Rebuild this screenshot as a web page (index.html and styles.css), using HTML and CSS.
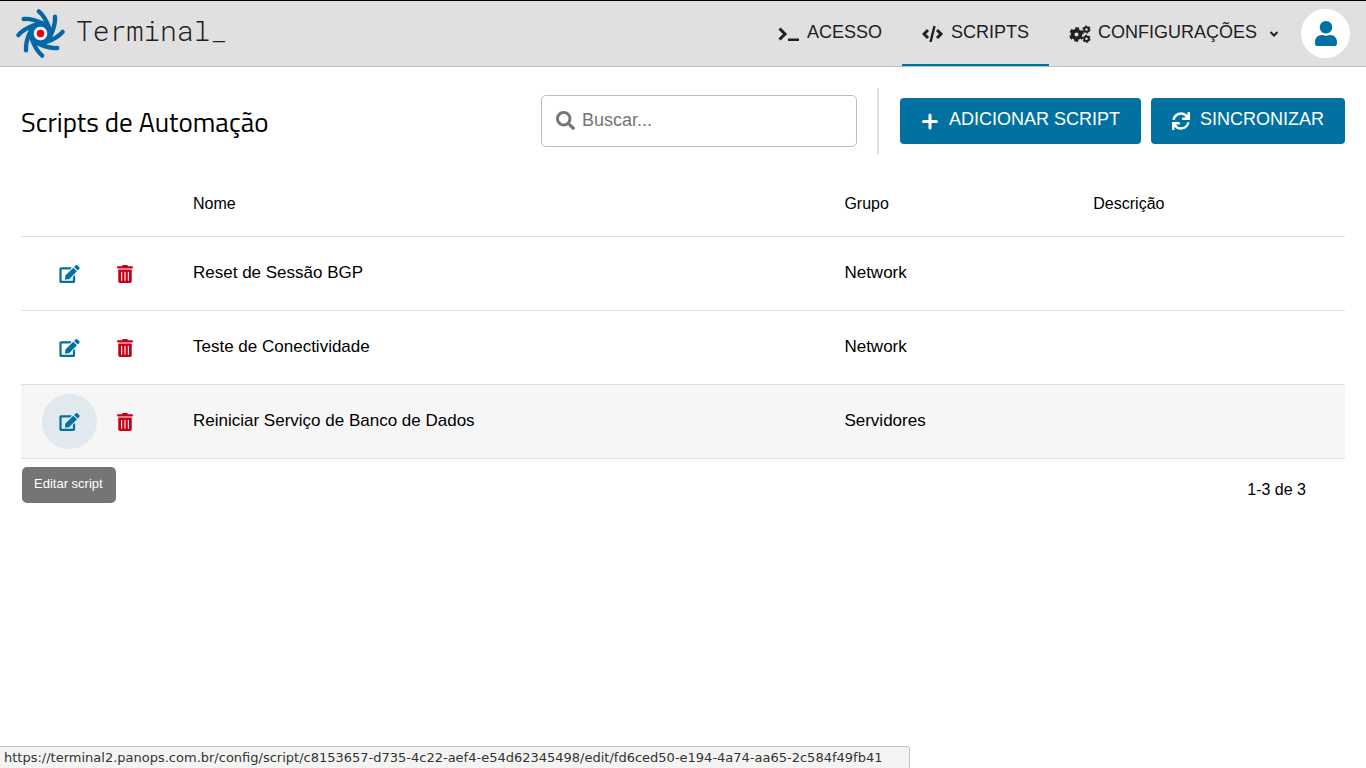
FILE: index.html
```html
<!DOCTYPE html>
<html lang="pt-BR">
<head>
<meta charset="utf-8">
<meta name="viewport" content="width=device-width, initial-scale=1">
<title>Terminal_ - Scripts de Automação</title>
<link rel="stylesheet" href="styles.css">
</head>
<body>
<svg class="symbols" aria-hidden="true">
  <symbol id="edit" viewBox="0 0 576 512"><path d="M402.6 83.2l90.2 90.2c3.8 3.8 3.8 10 0 13.8L274.4 405.6l-92.8 10.3c-12.4 1.4-22.9-9.1-21.5-21.5l10.3-92.8L388.8 83.2c3.8-3.8 10-3.8 13.8 0zm162-22.9l-48.8-48.8c-15.2-15.2-39.9-15.2-55.2 0l-35.4 35.4c-3.8 3.8-3.8 10 0 13.8l90.2 90.2c3.8 3.8 10 3.8 13.8 0l35.4-35.4c15.2-15.3 15.2-40 0-55.2zM384 346.2V448H64V128h229.8c3.2 0 6.2-1.3 8.5-3.5l40-40c7.6-7.6 2.2-20.5-8.5-20.5H48C21.5 64 0 85.5 0 112v352c0 26.5 21.5 48 48 48h352c26.5 0 48-21.5 48-48V306.2c0-10.7-12.9-16-20.5-8.5l-40 40c-2.2 2.3-3.5 5.3-3.5 8.5z"/></symbol>
  <symbol id="trash" viewBox="0 0 448 512"><path d="M32 464a48 48 0 0 0 48 48h288a48 48 0 0 0 48-48V128H32zm272-256a16 16 0 0 1 32 0v224a16 16 0 0 1-32 0zm-96 0a16 16 0 0 1 32 0v224a16 16 0 0 1-32 0zm-96 0a16 16 0 0 1 32 0v224a16 16 0 0 1-32 0zM432 32H312l-9.4-18.7A24 24 0 0 0 281.1 0H166.8a23.72 23.72 0 0 0-21.4 13.3L136 32H16A16 16 0 0 0 0 48v32a16 16 0 0 0 16 16h416a16 16 0 0 0 16-16V48a16 16 0 0 0-16-16z"/></symbol>
</svg>

<header class="topbar">
  <a class="brand" href="#">
    <svg class="logo" viewBox="-76 -76 152 152" aria-hidden="true">
      <g fill="none" stroke="#0568a6" stroke-width="13" stroke-linecap="round">
        <path d="M-5-66Q14-50 26-16"/>
        <path d="M-5-66Q14-50 26-16" transform="rotate(45)"/>
        <path d="M-5-66Q14-50 26-16" transform="rotate(90)"/>
        <path d="M-5-66Q14-50 26-16" transform="rotate(135)"/>
        <path d="M-5-66Q14-50 26-16" transform="rotate(180)"/>
        <path d="M-5-66Q14-50 26-16" transform="rotate(225)"/>
        <path d="M-5-66Q14-50 26-16" transform="rotate(270)"/>
        <path d="M-5-66Q14-50 26-16" transform="rotate(315)"/>
      </g>
      <circle r="28" fill="none" stroke="#0568a6" stroke-width="16"/>
      <circle r="20" fill="#eef1f3"/>
      <circle r="11" fill="#e8000d"/>
    </svg>
    <span class="brand-name">Terminal_</span>
  </a>
  <nav class="nav">
    <a class="nav-item" href="#">
      <svg class="icon-nav" viewBox="0 0 22 18" aria-hidden="true"><path d="M1.5 3.500l5.500 5.500L1.500 14.500" fill="none" stroke="currentColor" stroke-width="3"/><path d="M10 13.500H21V16H10z"/></svg>
      <span class="label">ACESSO</span>
    </a>
    <a class="nav-item active" href="#" aria-current="page">
      <svg class="icon-nav" viewBox="0 0 22 18" aria-hidden="true"><path d="M6 5L2 9l4 4M15 5l4 4-4 4" fill="none" stroke="currentColor" stroke-width="3"/><path d="M12.500 1L8.500 17" stroke="currentColor" stroke-width="2.500"/></svg>
      <span class="label">SCRIPTS</span>
    </a>
    <a class="nav-item" href="#">
      <svg class="icon-nav" viewBox="0 0 22 18" aria-hidden="true">
        <g fill="none" stroke="currentColor">
          <circle cx="7.500" cy="9.500" r="3.900" stroke-width="3.800"/>
          <circle cx="7.500" cy="9.500" r="6" stroke-width="2.600" stroke-dasharray="3.600 2.683" stroke-dashoffset="1.800" transform="rotate(30 7.500 9.500)"/>
          <circle cx="17.500" cy="4.500" r="2.300" stroke-width="2"/>
          <circle cx="17.500" cy="4.500" r="3.500" stroke-width="1.200" stroke-dasharray="1.900 1.765"/>
          <circle cx="17.500" cy="13.800" r="2.300" stroke-width="2"/>
          <circle cx="17.500" cy="13.800" r="3.500" stroke-width="1.200" stroke-dasharray="1.900 1.765"/>
        </g>
      </svg>
      <span class="label">CONFIGURAÇÕES</span>
      <svg class="chevron" viewBox="0 0 10 10" aria-hidden="true"><path d="M1.500 3L5 6.500 8.500 3" fill="none" stroke="currentColor" stroke-width="2"/></svg>
    </a>
  </nav>
  <button class="avatar" type="button" aria-label="Usuário">
    <svg class="icon-user" viewBox="0 0 448 512" aria-hidden="true"><path d="M224 256c70.700 0 128-57.300 128-128S294.700 0 224 0 96 57.300 96 128s57.300 128 128 128zm89.600 32h-16.700c-22.200 10.200-46.900 16-72.900 16s-50.600-5.800-72.900-16h-16.700C60.200 288 0 348.200 0 422.400V464c0 26.500 21.500 48 48 48h352c26.500 0 48-21.500 48-48v-41.600c0-74.200-60.200-134.400-134.400-134.400z"/></svg>
  </button>
</header>

<main class="page">
  <div class="toolbar">
    <h1 class="title">Scripts de Automação</h1>
    <label class="search">
      <svg class="icon-search" viewBox="0 0 512 512" aria-hidden="true"><path d="M505 442.700L405.300 343c-4.500-4.500-10.600-7-17-7H372c27.600-35.300 44-79.700 44-128C416 93.100 322.900 0 208 0S0 93.100 0 208s93.100 208 208 208c48.300 0 92.700-16.400 128-44v16.300c0 6.400 2.500 12.500 7 17l99.700 99.700c9.400 9.400 24.600 9.400 33.900 0l28.300-28.300c9.400-9.400 9.400-24.600.1-34zM208 336c-70.700 0-128-57.200-128-128 0-70.700 57.200-128 128-128 70.700 0 128 57.200 128 128 0 70.700-57.200 128-128 128z"/></svg>
      <input class="search-input" type="text" placeholder="Buscar..." aria-label="Buscar">
    </label>
    <div class="actions">
      <button class="button" type="button">
        <svg class="icon-button" viewBox="0 0 18 18" aria-hidden="true"><path d="M9 3v13M2.500 9.500h13" fill="none" stroke="currentColor" stroke-width="3" stroke-linecap="round"/></svg>
        <span class="label">ADICIONAR SCRIPT</span>
      </button>
      <button class="button" type="button">
        <svg class="icon-button" viewBox="0 0 512 512" aria-hidden="true"><path d="M440.650 12.570l4 82.770A247.160 247.160 0 0 0 255.830 8C134.730 8 33.910 94.920 12.290 209.820A12 12 0 0 0 24.090 224h49.050a12 12 0 0 0 11.670-9.260 175.910 175.910 0 0 1 317-56.940l-101.460-4.860a12 12 0 0 0-12.570 12v47.410a12 12 0 0 0 12 12H500a12 12 0 0 0 12-12V12a12 12 0 0 0-12-12h-47.370a12 12 0 0 0-11.980 12.570zM255.830 432a175.610 175.610 0 0 1-146-77.800l101.800 4.870a12 12 0 0 0 12.570-12v-47.400a12 12 0 0 0-12-12H12a12 12 0 0 0-12 12V500a12 12 0 0 0 12 12h47.350a12 12 0 0 0 12-12.600l-4.150-82.570A247.170 247.170 0 0 0 255.830 504c121.110 0 221.930-86.920 243.550-201.820a12 12 0 0 0-11.800-14.180h-49.050a12 12 0 0 0-11.670 9.260A175.860 175.860 0 0 1 255.830 432z"/></svg>
        <span class="label">SINCRONIZAR</span>
      </button>
    </div>
  </div>

  <table class="table">
    <colgroup><col class="col-actions"><col class="col-name"><col class="col-group"><col></colgroup>
    <thead>
      <tr><td></td><th scope="col">Nome</th><th scope="col">Grupo</th><th scope="col">Descrição</th></tr>
    </thead>
    <tbody>
      <tr>
        <td class="cell-actions"><div class="row-actions">
          <a class="row-action edit" href="#" aria-label="Editar script"><svg class="icon-edit" aria-hidden="true"><use href="#edit"/></svg></a>
          <button class="row-action delete" type="button" aria-label="Excluir script"><svg class="icon-trash" aria-hidden="true"><use href="#trash"/></svg></button>
        </div></td>
        <td>Reset de Sessão BGP</td><td>Network</td><td></td>
      </tr>
      <tr>
        <td class="cell-actions"><div class="row-actions">
          <a class="row-action edit" href="#" aria-label="Editar script"><svg class="icon-edit" aria-hidden="true"><use href="#edit"/></svg></a>
          <button class="row-action delete" type="button" aria-label="Excluir script"><svg class="icon-trash" aria-hidden="true"><use href="#trash"/></svg></button>
        </div></td>
        <td>Teste de Conectividade</td><td>Network</td><td></td>
      </tr>
      <tr class="hovered">
        <td class="cell-actions"><div class="row-actions">
          <a class="row-action edit hovered-action" href="#" aria-describedby="tip"><svg class="icon-edit" aria-hidden="true"><use href="#edit"/></svg><span class="tooltip" id="tip" role="tooltip">Editar script</span></a>
          <button class="row-action delete" type="button" aria-label="Excluir script"><svg class="icon-trash" aria-hidden="true"><use href="#trash"/></svg></button>
        </div></td>
        <td>Reiniciar Serviço de Banco de Dados</td><td>Servidores</td><td></td>
      </tr>
    </tbody>
  </table>
  <p class="pagination">1-3 de 3</p>
</main>

<div class="status">https://terminal2.panops.com.br/config/script/c8153657-d735-4c22-aef4-e54d62345498/edit/fd6ced50-e194-4a74-aa65-2c584f49fb41</div>
</body>
</html>
```
FILE: styles.css
```css
* {
  box-sizing: border-box;
}

body {
  margin: 0;
  background: #fff;
  color: #000;
  font: 16px/20px "Liberation Sans", Arial, sans-serif;
}

svg {
  display: block;
  flex: none;
  fill: currentColor;
}

a {
  color: inherit;
  text-decoration: none;
}

button {
  border: 0;
  padding: 0;
  background: none;
  font: inherit;
  cursor: pointer;
}

.symbols {
  position: absolute;
  width: 0;
  height: 0;
}

.label {
  padding-bottom: 4px;
}

.topbar {
  display: flex;
  align-items: stretch;
  height: 67px;
  padding: 0 16px 0 15px;
  border-top: 1px solid #000;
  border-bottom: 1px solid #c0c0c0;
  background: #e0e0e0;
  color: #212121;
}

.brand {
  display: flex;
  align-items: center;
  gap: 10px;
}

.logo {
  width: 51px;
  height: 51px;
}

.brand-name {
  padding-bottom: 5px;
  font: 300 28px/32px "Roboto Mono", "Liberation Mono", monospace;
}

.nav {
  display: flex;
  margin-left: auto;
  font-size: 18px;
}

.nav-item {
  display: flex;
  align-items: center;
  gap: 7px;
  padding: 2px 20px 0;
  border-bottom: 2px solid transparent;
}

.nav-item.active {
  border-color: #0071a1;
}

.icon-nav {
  width: 22px;
  height: 18px;
}

.chevron {
  width: 10px;
  height: 10px;
  margin-left: 5px;
}

.avatar {
  display: grid;
  place-items: center;
  align-self: center;
  width: 49px;
  height: 49px;
  margin-left: 2px;
  border-radius: 50%;
  background: #fff;
  color: #0071a1;
}

.icon-user {
  width: 22px;
  height: 25px;
}

.page {
  padding: 21px;
}

.toolbar {
  display: flex;
  align-items: center;
}

.title {
  flex: 1;
  margin: 0;
  padding-top: 2px;
  font: 400 27px/34px "Titillium Web", "Open Sans", sans-serif;
}

.search {
  display: flex;
  align-items: center;
  gap: 7px;
  width: 316px;
  height: 52px;
  margin-right: 20px;
  padding: 0 14px 1px;
  border: 1px solid #bdbdbd;
  border-radius: 5px;
  color: #757575;
}

.icon-search {
  width: 19px;
  height: 19px;
}

.search-input {
  flex: 1;
  min-width: 0;
  padding: 0 0 2px;
  border: 0;
  outline: 0;
  background: none;
  font: inherit;
  font-size: 18px;
}

.search-input::placeholder {
  color: #757575;
  opacity: 1;
}

.actions {
  display: flex;
  gap: 10px;
  padding: 10px 0 10px 21px;
  border-left: 2px solid #e0e0e0;
}

.button {
  display: flex;
  align-items: center;
  gap: 10px;
  height: 46px;
  padding: 0 21px 1px;
  border-radius: 4px;
  background: #0071a1;
  color: #fff;
  font-size: 18px;
}

.icon-button {
  width: 18px;
  height: 18px;
}

.table {
  width: 100%;
  margin-top: 16px;
  border-collapse: collapse;
  table-layout: fixed;
  font-size: 17px;
}

.col-actions {
  width: 152px;
}

.col-name {
  width: 49.2%;
}

.col-group {
  width: 18.8%;
}

.table tr {
  height: 74px;
  border-bottom: 1px solid #e0e0e0;
}

.table thead tr {
  height: 66px;
}

.table th,
.table td {
  padding: 0 20px 1px;
  font-weight: 400;
  text-align: left;
}

.table th {
  padding-bottom: 0;
  padding-top: 2px;
  font-size: 16px;
}

.table .cell-actions {
  padding: 1px 0 0 21px;
}

.hovered {
  background: #f6f6f6;
}

.row-actions {
  display: flex;
}

.row-action {
  position: relative;
  display: grid;
  place-items: center;
  width: 55px;
  height: 55px;
  border-radius: 50%;
}

.edit {
  color: #0071a1;
}

.delete {
  color: #c60018;
}

.hovered-action {
  background: #e1e9ee;
}

.icon-edit {
  width: 21px;
  height: 18px;
}

.icon-trash {
  width: 16px;
  height: 18px;
}

.tooltip {
  position: absolute;
  top: 73px;
  left: -20px;
  padding: 7px 13px 9px 12px;
  border-radius: 5px;
  background: #757575;
  color: #fff;
  font-size: 13px;
  white-space: nowrap;
}

.pagination {
  margin: 21px 39px 0 0;
  text-align: right;
}

.status {
  position: fixed;
  bottom: 0;
  left: 0;
  padding: 1px 27px 0 4px;
  border: 1px solid #c4c2bf;
  border-width: 1px 1px 0 0;
  border-radius: 0 4px 0 0;
  background: #f5f4f2;
  color: #2e3436;
  font: 13px/20px "DejaVu Sans", sans-serif;
}
```
